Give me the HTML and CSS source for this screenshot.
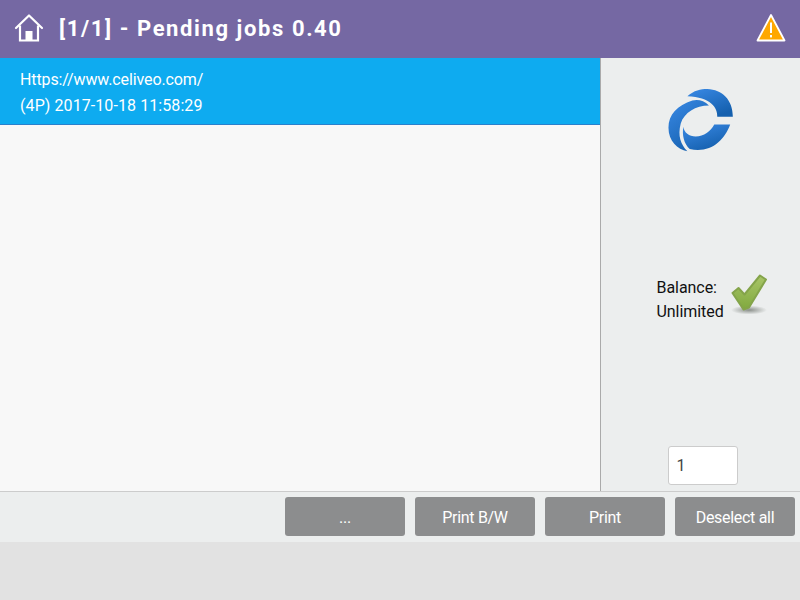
FILE: index.html
```html
<!DOCTYPE html>
<html lang="en">
<head>
<meta charset="utf-8">
<title>Pending jobs</title>
<link rel="stylesheet" href="styles.css">
</head>
<body>
<header class="topbar">
  <svg class="home" viewBox="0 0 30 30" width="30" height="30"><path d="M2 15 L15 2.5 L28 15" fill="none" stroke="#fff" stroke-width="2.2" stroke-linecap="round" stroke-linejoin="round"/><path d="M6 12.5 V27.5 H24 V12.5" fill="none" stroke="#fff" stroke-width="2.2"/><rect x="11.5" y="18" width="7" height="9" fill="#fff"/></svg>
  <h1 class="title">[1/1] - Pending jobs 0.40</h1>
  <svg class="warn" viewBox="0 0 30 30" width="30" height="30"><path d="M15 2 L28.5 27.5 H1.5 Z" fill="#ffa800" stroke="#fff" stroke-width="1.8" stroke-linejoin="round"/><rect x="14" y="9.5" width="2" height="10.5" fill="#fff"/><rect x="14" y="22" width="2" height="2.4" fill="#fff"/></svg>
</header>
<main class="content">
  <section class="jobs">
    <div class="job">
      <div class="job-url">Https://www.celiveo.com/</div>
      <div class="job-meta">(4P) 2017-10-18 11:58:29</div>
    </div>
  </section>
  <aside class="side">
    <svg class="logo" viewBox="60 250 240 220" width="80" height="73">
      <defs><linearGradient id="lg" x1="0" y1="0" x2="0.6" y2="1"><stop offset="0" stop-color="#3a8ae6"/><stop offset="1" stop-color="#1560ae"/></linearGradient></defs>
      <path fill="url(#lg)" d="M145 290 C165 272 185 268 205 268 C250 270 282 300 282 352 H235 C237 325 215 292 145 290 Z"/>
      <path fill="url(#lg)" d="M210 318 C195 302 175 298 160 303 C115 318 88 345 88 385 C88 425 115 450 145 456 C125 435 115 410 125 372 C135 340 170 318 210 318 Z"/>
      <path fill="url(#lg)" d="M274 375 H226 C215 395 195 411 170 411 C150 411 135 400 133 382 C128 405 135 435 152 449 C215 462 255 425 274 375 Z"/>
    </svg>
    <div class="balance">
      <div class="balance-text"><div>Balance:</div><div>Unlimited</div></div>
      <svg class="check" viewBox="0 0 44 44" width="44" height="44"><defs><radialGradient id="sh"><stop offset="0" stop-color="#8a8f8a"/><stop offset="1" stop-color="#eceeee"/></radialGradient><linearGradient id="cg" x1="0" y1="0" x2="0" y2="1"><stop offset="0" stop-color="#a9c568"/><stop offset="1" stop-color="#80a93e"/></linearGradient></defs><ellipse cx="20" cy="38" rx="18" ry="4.5" fill="url(#sh)"/><path d="M3.5 21 L9.5 16 L15.5 22.5 L31 3.5 L37 7.5 L20 35.5 L14.5 37.5 Z" fill="url(#cg)" stroke="#84a44a" stroke-width="2" stroke-linejoin="round"/></svg>
    </div>
    <div class="copies">1</div>
  </aside>
</main>
<footer class="actions">
  <button class="btn">...</button>
  <button class="btn">Print B/W</button>
  <button class="btn">Print</button>
  <button class="btn">Deselect all</button>
</footer>
</body>
</html>
```
FILE: styles.css
```css
* { box-sizing: border-box; }
html, body { margin: 0; padding: 0; }
body {
  width: 800px;
  height: 600px;
  background: #e2e2e2;
  font-family: Roboto, "Noto Sans", sans-serif;
  overflow: hidden;
}
.topbar {
  height: 58px;
  background: #7568a3;
  display: flex;
  align-items: center;
  padding: 0 14px;
  color: #fff;
}
.home { flex: none; margin-top: -2px; }
.title {
  margin: -2px 0 0 15px;
  font-size: 22px;
  font-weight: 700;
  letter-spacing: 1.6px;
  flex: 1;
}
.warn { flex: none; margin-top: -2px; }
.content {
  height: 433px;
  display: flex;
}
.jobs {
  width: 600px;
  background: #f8f8f8;
}
.job {
  height: 67px;
  background: #0eabf0;
  border-bottom: 1px solid #2a80cc;
  color: #fff;
  font-size: 16px;
  line-height: 25px;
  padding: 9px 20px 0;
}
.job-url { letter-spacing: -0.12px; }
.job-meta { letter-spacing: 0.08px; padding-top: 1px; }
.side {
  width: 200px;
  background: #eceeee;
  border-left: 1px solid #aaaaaa;
  display: flex;
  flex-direction: column;
  align-items: center;
  padding-top: 25px;
}
.logo { flex: none; margin-left: -3px; }
.balance {
  display: flex;
  align-items: flex-start;
  margin-top: 119px;
  margin-left: 32px;
  font-size: 16px;
  line-height: 24px;
  color: #111;
  width: 120px;
  gap: 5px;
}
.balance-text { padding-top: 1px; white-space: nowrap; letter-spacing: -0.05px; }
.check { flex: none; margin-top: -3px; }
.copies {
  width: 70px;
  height: 39px;
  margin-top: auto;
  margin-bottom: 6px;
  margin-left: 4px;
  background: #fff;
  border: 1px solid #cccccc;
  border-radius: 3px;
  font-size: 16px;
  line-height: 37px;
  padding-left: 8px;
  color: #444;
}
.actions {
  height: 51px;
  background: #eceeee;
  border-top: 1px solid #cccccc;
  display: flex;
  justify-content: flex-end;
  gap: 10px;
  padding: 5px 5px 6px;
}
.btn {
  width: 120px;
  height: 39px;
  background: #8c8d8e;
  border: 0;
  border-radius: 3px;
  color: #fff;
  font-family: inherit;
  font-size: 16px;
  letter-spacing: -0.3px;
  padding: 1px 0 0;
}
```
